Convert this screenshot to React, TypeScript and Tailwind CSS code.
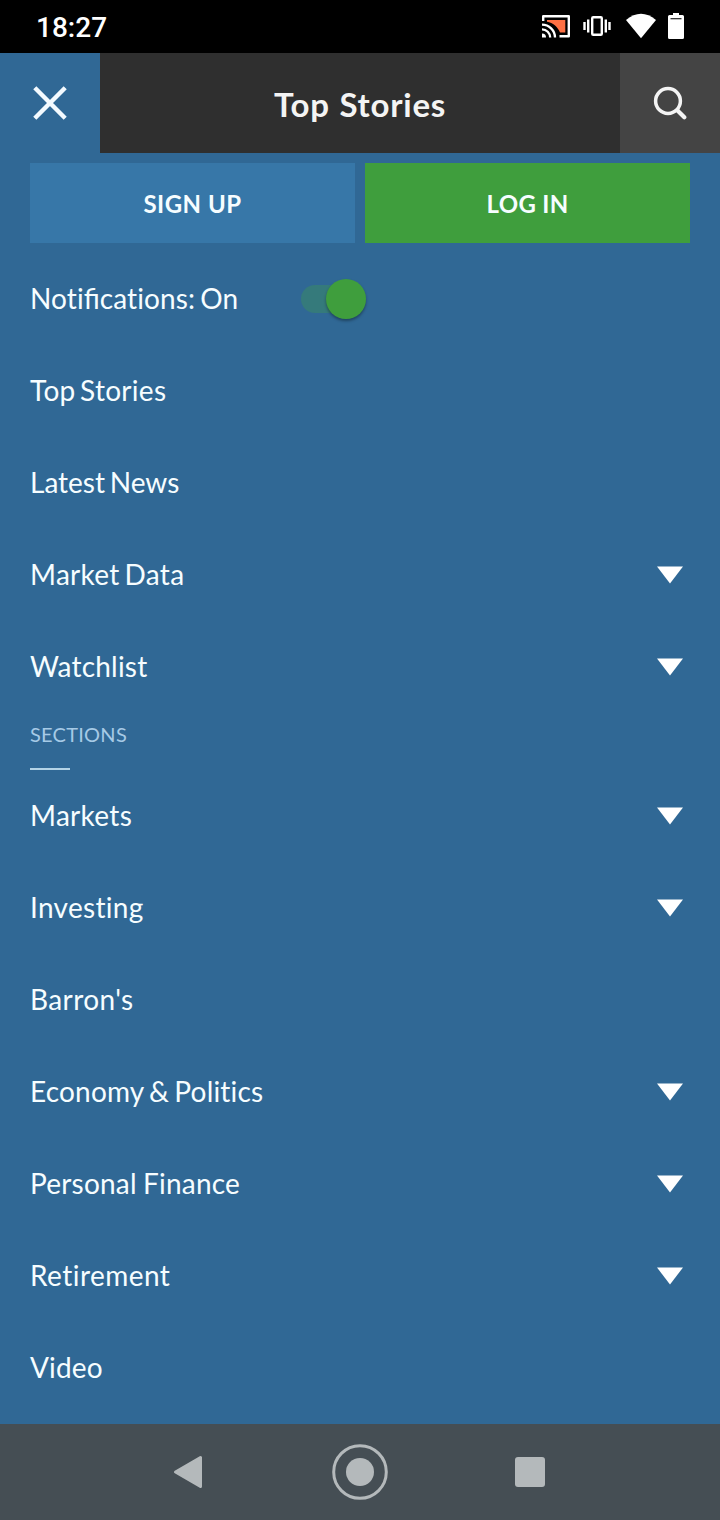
type Item = { label: string; expandable?: boolean; spacing?: string };

const mainItems: Item[] = [
  { label: 'Top Stories', spacing: 'tracking-[0.3px] [word-spacing:-3px]' },
  { label: 'Latest News', spacing: 'tracking-[0px] [word-spacing:-2.5px]' },
  { label: 'Market Data', expandable: true, spacing: 'tracking-[0.3px] [word-spacing:-2.5px]' },
  { label: 'Watchlist', expandable: true, spacing: 'tracking-[0.2px]' },
];

const sectionItems: Item[] = [
  { label: 'Markets', expandable: true, spacing: 'tracking-[0.3px]' },
  { label: 'Investing', expandable: true, spacing: 'tracking-[0.3px]' },
  { label: "Barron's", spacing: 'tracking-[0.4px]' },
  { label: 'Economy & Politics', expandable: true, spacing: 'tracking-[0.2px] [word-spacing:-2.2px]' },
  { label: 'Personal Finance', expandable: true, spacing: 'tracking-[0.2px] [word-spacing:-1px]' },
  { label: 'Retirement', expandable: true, spacing: 'tracking-[0.45px]' },
  { label: 'Video', spacing: 'tracking-[0.15px]' },
];

function StatusBar() {
  return (
    <div className="flex h-[53px] shrink-0 items-center justify-between bg-black pl-9 pr-[35px] text-white">
      <span className="pt-0.5 font-['Roboto',sans-serif] text-[28px] font-medium leading-none">18:27</span>
      <svg width="144" height="28" viewBox="541 13 144 28" fill="none" className="block">
        <path d="M547 20H565.3V32.5H560C557.5 26.5 553 23 547 21.8Z" fill="#ff7043" />
        <path d="M543.2 21V16.2H568.8V36.3H559.5" stroke="#fff" strokeWidth="2.4" strokeLinejoin="round" />
        <path d="M542 24.7A13 13 0 0 1 555 37.5M542 29.4A8.2 8.2 0 0 1 550.2 37.5" stroke="#fff" strokeWidth="2.3" />
        <path d="M542 33.5A4 4 0 0 1 546 37.5H542Z" fill="#fff" />
        <rect x="592.2" y="17.2" width="9.6" height="17.6" rx="1" stroke="#fff" strokeWidth="2.4" />
        <path d="M588.2 19.5V32.5M605.8 19.5V32.5M584.5 22V30M609.5 22V30" stroke="#fff" strokeWidth="2.4" />
        <path d="M626 20Q641 7.5 656 20L641 38.2Z" fill="#fff" />
        <path d="M673 13H679V15H682.5Q684 15 684 16.5V37.5Q684 39 682.5 39H669.5Q668 39 668 37.5V16.5Q668 15 669.5 15H673Z" fill="#fff" />
        <path d="M670.5 18.7H681.5" stroke="#222" strokeWidth="1.2" />
      </svg>
    </div>
  );
}

function Header() {
  return (
    <header className="flex h-[100px] shrink-0 bg-[#2f2f2f]">
      <button className="flex w-[100px] items-center justify-center bg-[#306895]" aria-label="Close">
        <svg width="34" height="34" viewBox="0 0 34 34" className="block">
          <path d="M1.8 1.8L32.2 32.2M32.2 1.8L1.8 32.2" stroke="#f3faff" strokeWidth="4.4" />
        </svg>
      </button>
      <h1 className="flex flex-1 items-center justify-center whitespace-nowrap pt-[3px] font-['Lato',sans-serif] text-[33px] font-bold leading-none tracking-[0.75px] [word-spacing:1px] text-[#f4f4f4]">
        Top Stories
      </h1>
      <button className="flex w-[100px] items-center justify-center bg-[#444444]" aria-label="Search">
        <svg width="34" height="34" viewBox="653 86 34 34" fill="none" className="block">
          <circle cx="668" cy="101" r="12.4" stroke="#f4f4f4" strokeWidth="3.5" />
          <path d="M677.5 110.5L684.3 117.3" stroke="#f4f4f4" strokeWidth="4.2" strokeLinecap="round" />
        </svg>
      </button>
    </header>
  );
}

function Row({ item }: { item: Item }) {
  return (
    <li className="flex h-[92px] items-center justify-between pl-[30px] pr-[37px]">
      <span className={`whitespace-nowrap pb-0.5 ${item.spacing ?? ''}`}>{item.label}</span>
      {item.expandable && (
        <svg width="26" height="18" viewBox="0 0 26 18" className="block">
          <path d="M0 .5H26L13 17.5Z" fill="#fff" />
        </svg>
      )}
    </li>
  );
}

export default function App() {
  return (
    <div className="flex h-[1520px] w-[720px] flex-col overflow-hidden bg-[#306895] font-['Lato',sans-serif] text-[28px] leading-none text-[#f6fdff]">
      <StatusBar />
      <Header />
      <div className="flex shrink-0 gap-2.5 px-[30px] pt-2.5 text-[24px] font-bold">
        <button className="flex h-20 flex-1 items-center justify-center bg-[#3777a8] pt-0.5 tracking-[0.5px]">SIGN UP</button>
        <button className="flex h-20 flex-1 items-center justify-center bg-[#3f9e3d] pt-0.5 tracking-[0.3px]">LOG IN</button>
      </div>
      <div className="mt-2.5 flex h-[92px] shrink-0 items-center pl-[30px]">
        <span className="w-[271px] whitespace-nowrap pb-0.5 tracking-[0.1px] [word-spacing:-2px]">
          Noti<span className="tracking-normal">fi</span>cations: On
        </span>
        <div className="flex h-7 w-[65px] items-center justify-end rounded-full bg-[#357a7b]">
          <div className="h-10 w-10 shrink-0 rounded-full bg-[#3f9e3d] shadow-[0_2px_3px_rgba(0,0,0,0.35)]" />
        </div>
      </div>
      <ul className="shrink-0">
        {mainItems.map((item) => <Row key={item.label} item={item} />)}
      </ul>
      <div className="flex h-[57px] shrink-0 flex-col justify-between pl-[30px] pt-[11px]">
        <span className="text-[20px] tracking-[0.25px] text-[#a6cae6]">SECTIONS</span>
        <div className="h-0.5 w-10 bg-[#b3d3e6]" />
      </div>
      <ul className="shrink-0">
        {sectionItems.map((item) => <Row key={item.label} item={item} />)}
      </ul>
      <nav className="mt-auto flex h-24 shrink-0 items-center justify-between bg-[#454e54] pl-[173px] pr-[175px]">
        <svg width="32" height="34" viewBox="0 0 32 34" className="block">
          <path d="M2.5 17L27.5 2.5V31.5Z" fill="#b4b9bb" stroke="#b4b9bb" strokeWidth="3" strokeLinejoin="round" />
        </svg>
        <svg width="56" height="56" viewBox="0 0 56 56" className="block">
          <circle cx="28" cy="28" r="26.3" fill="none" stroke="#b4b9bb" strokeWidth="3" />
          <circle cx="28" cy="28" r="14" fill="#b4b9bb" />
        </svg>
        <div className="h-[30px] w-[30px] rounded-[3px] bg-[#b4b9bb]" />
      </nav>
    </div>
  );
}
